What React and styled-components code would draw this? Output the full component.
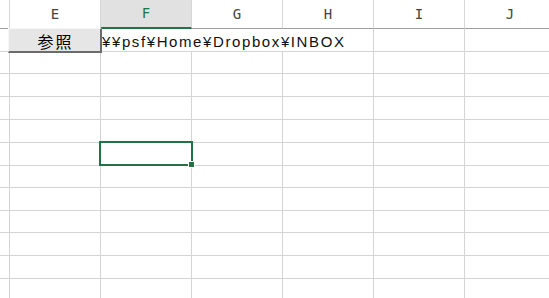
import React from 'react'
import styled, { createGlobalStyle } from 'styled-components'

// sheet layout: partial column D, then E..J at 91px each
const COLS = ['', 'E', 'F', 'G', 'H', 'I', 'J']
const ROW_HEIGHTS = [23, 22, 23, 23, 23, 23, 22, 23, 22, 23, 23, 23]
const ACTIVE_COL = 'F'
const ACTIVE_ROW = 5 // zero based, row 6 on screen

const GlobalStyle = createGlobalStyle`
  html, body {
    margin: 0;
    padding: 0;
    background: #ffffff;
    overflow: hidden;
  }
`

const Sheet = styled.div`
  display: grid;
  grid-template-columns: 10px repeat(6, 91px);
  grid-template-rows: 29px ${ROW_HEIGHTS.map((h) => h + 'px').join(' ')};
  width: 549px;
  height: 298px;
  overflow: hidden;
  font-family: "Liberation Sans", Arial, sans-serif;
`

const HeaderCell = styled.div`
  box-sizing: border-box;
  display: flex;
  align-items: center;
  justify-content: center;
  padding-bottom: 1px;
  border-right: 1px solid #d6d6d6;
  border-bottom: ${(p) => (p.$active ? '2px solid #217346' : '1px solid #9e9e9e')};
  background: ${(p) => (p.$active ? '#e1e1e1' : '#ffffff')};
  color: ${(p) => (p.$active ? '#217346' : '#444444')};
  font-family: "DejaVu Sans Mono", monospace;
  font-size: 14px;
`

const Cell = styled.div`
  box-sizing: border-box;
  position: relative;
  border-right: 1px solid #d4d4d4;
  border-bottom: 1px solid #d4d4d4;
  grid-column: ${(p) => (p.$span ? `span ${p.$span}` : 'auto')};
`

const PathText = styled.div`
  display: flex;
  align-items: center;
  height: 100%;
  padding: 1px 0 0 1px;
  white-space: nowrap;
  font-size: 15px;
  letter-spacing: 1.6px;
  color: #111111;
`

const BrowseButton = styled.button`
  position: absolute;
  left: -2px;
  top: -1px;
  width: 94px;
  height: 25px;
  box-sizing: border-box;
  margin: 0;
  padding: 0 0 1px 2px;
  background: #e6e6e6;
  border: 1px solid #f6f6f6;
  border-right: 2px solid #6b6b6b;
  border-bottom: 2px solid #6b6b6b;
  font-family: "Noto Sans CJK JP", sans-serif;
  font-size: 16px;
  letter-spacing: 2px;
  color: #000000;
  z-index: 2;
`

const Selection = styled.div`
  position: absolute;
  left: -2px;
  top: -2px;
  width: 94px;
  height: 25px;
  box-sizing: border-box;
  border: 2px solid #217346;
  z-index: 3;
`

const FillHandle = styled.div`
  position: absolute;
  right: -4px;
  bottom: -4px;
  width: 5px;
  height: 5px;
  background: #217346;
  border: 1px solid #ffffff;
`

const App = () => {
  return (
    <>
      <GlobalStyle />
      <Sheet>
        {COLS.map((c, i) => (
          <HeaderCell key={'h' + i} $active={c === ACTIVE_COL}>{c}</HeaderCell>
        ))}

        {/* first row: button in E, path text running over F..H */}
        <Cell />
        <Cell>
          <BrowseButton>参照</BrowseButton>
        </Cell>
        <Cell $span={3}>
          <PathText>¥¥psf¥Home¥Dropbox¥INBOX</PathText>
        </Cell>
        <Cell />
        <Cell />

        {ROW_HEIGHTS.slice(1).map((h, r) =>
          COLS.map((c, i) => {
            const selected = r + 1 === ACTIVE_ROW && c === ACTIVE_COL
            return (
              <Cell key={r + '-' + i}>
                {selected && (
                  <Selection>
                    <FillHandle />
                  </Selection>
                )}
              </Cell>
            )
          })
        )}
      </Sheet>
    </>
  )
}

export default App
